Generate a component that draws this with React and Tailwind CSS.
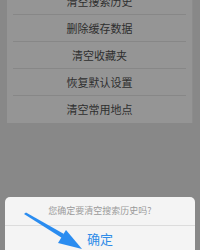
import React from 'react';

const rows = ['清空搜索历史', '删除缓存数据', '清空收藏夹', '恢复默认设置', '清空常用地点'];

export default function App() {
  return (
    <div
      className="relative w-[200px] h-[250px] overflow-hidden bg-[#888888]"
      style={{ fontFamily: '"Noto Sans CJK SC", "Noto Sans", sans-serif' }}
    >
      {/* settings list (dimmed) */}
      <div className="mx-[7px] -mt-[12px] bg-[#959595] border-r border-[#8c8c8c]">
        {rows.map((r, i) => (
          <div key={r} className="px-[6px]">
            <div
              className={
                'h-[27px] flex items-center justify-center text-[11px] text-[#2e2e2e] ' +
                (i < rows.length - 1 ? 'border-b border-[#878787]' : '')
              }
            >
              {r}
            </div>
          </div>
        ))}
      </div>

      {/* confirm sheet */}
      <div className="absolute left-[5px] right-[5px] top-[197px] bottom-0 bg-[#f4f4f4] rounded-t-[5px]">
        <div className="h-[29px] flex items-center justify-center text-[9px] text-[#9a9a9a] border-b border-[#dcdcdc]">
          您确定要清空搜索历史吗?
        </div>
        <div className="flex justify-center pt-[3px] text-[13px] text-[#2f8ce8]">确定</div>
      </div>

      {/* arrow */}
      <svg className="absolute left-0 top-0" width="200" height="250" viewBox="0 0 200 250">
        <path d="M24 214 L26 212.5 L64 234 L62 238 Z" fill="#2a8cf0" />
        <polygon points="66,230 58,243 82,249" fill="#2a8cf0" />
      </svg>
    </div>
  );
}
